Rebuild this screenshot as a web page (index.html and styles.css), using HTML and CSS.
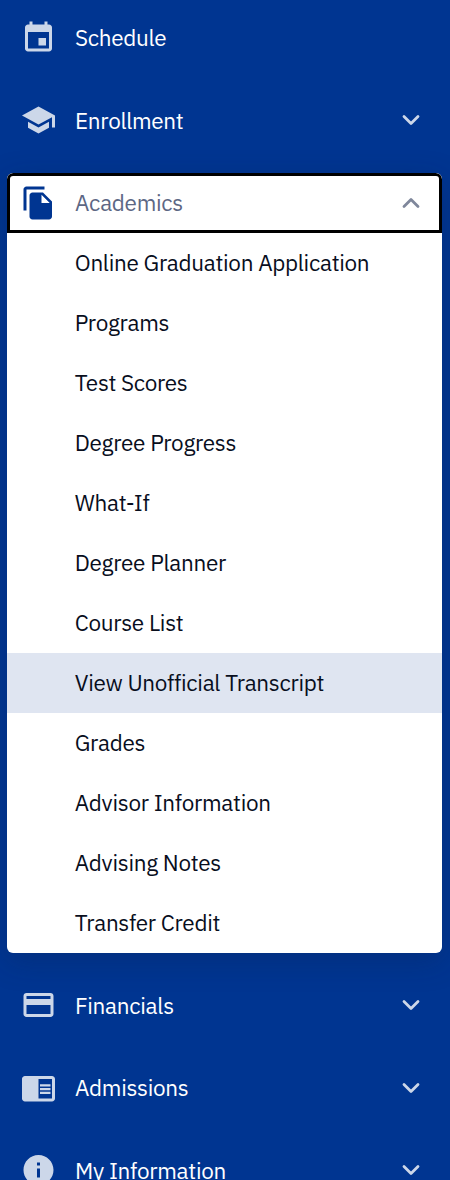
FILE: index.html
```
<!DOCTYPE html>
<html lang="en">
<head>
<meta charset="utf-8">
<title>Student menu</title>
<link rel="stylesheet" href="styles.css">
</head>
<body>
<nav class="menu">
  <a class="row">
    <svg class="icon" viewBox="-.33 0 24 24"><path d="M17 12h-5v5h5v-5zM16 1v2H8V1H6v2H5c-1.11 0-1.99.9-1.99 2L3 19c0 1.1.89 2 2 2h14c1.1 0 2-.9 2-2V5c0-1.1-.9-2-2-2h-1V1h-2zm3 18H5V8h14v11z"/></svg>
    <span class="label">Schedule</span>
  </a>
  <a class="row">
    <svg class="icon" viewBox="-.33 0 24 24"><path d="M5 13.18v4L12 21l7-3.82v-4L12 17l-7-3.82zM12 3L1 9l11 6 9-4.91V17h2V9L12 3z"/></svg>
    <span class="label">Enrollment</span>
    <svg class="chevron" viewBox="0 0 18 12"><path d="M2 2.5l7 7 7-7"/></svg>
  </a>
  <section class="panel">
    <a class="row row-open">
      <svg class="icon" viewBox="-.33 0 24 24"><path d="M16 1H4c-1.1 0-2 .9-2 2v14h2V3h12V1zm-1 4l6 6v10c0 1.1-.9 2-2 2H7.99C6.89 23 6 22.1 6 21l.01-14c0-1.1.89-2 1.99-2h7zm-1 7h5.5L14 6.5V12z"/></svg>
      <span class="label">Academics</span>
      <svg class="chevron" viewBox="0 0 18 12"><path d="M2 9.5l7-7 7 7"/></svg>
    </a>
    <a class="item">Online Graduation Application</a>
    <a class="item">Programs</a>
    <a class="item">Test Scores</a>
    <a class="item">Degree Progress</a>
    <a class="item">What-If</a>
    <a class="item">Degree Planner</a>
    <a class="item">Course List</a>
    <a class="item item-active">View Unofficial Transcript</a>
    <a class="item">Grades</a>
    <a class="item">Advisor Information</a>
    <a class="item">Advising Notes</a>
    <a class="item">Transfer Credit</a>
  </section>
  <a class="row">
    <svg class="icon" viewBox="-.33 0 24 24"><path d="M20 4H4c-1.11 0-1.99.89-1.99 2L2 18c0 1.11.89 2 2 2h16c1.11 0 2-.89 2-2V6c0-1.11-.89-2-2-2zm0 14H4v-6h16v6zm0-10H4V6h16v2z"/></svg>
    <span class="label">Financials</span>
    <svg class="chevron" viewBox="0 0 18 12"><path d="M2 2.5l7 7 7-7"/></svg>
  </a>
  <a class="row">
    <svg class="icon" viewBox="-.33 0 24 24"><path d="M13 12h7v1.5h-7zm0-2.5h7V11h-7zm0 5h7V16h-7zM21 4H3c-1.1 0-2 .9-2 2v13c0 1.1.9 2 2 2h18c1.1 0 2-.9 2-2V6c0-1.1-.9-2-2-2zm0 15h-9V6h9v13z"/></svg>
    <span class="label">Admissions</span>
    <svg class="chevron" viewBox="0 0 18 12"><path d="M2 2.5l7 7 7-7"/></svg>
  </a>
  <a class="row">
    <svg class="icon" viewBox="-.33 0 24 24"><path d="M12 2C6.48 2 2 6.48 2 12s4.48 10 10 10 10-4.48 10-10S17.52 2 12 2zm1 15h-2v-6h2v6zm0-8h-2V7h2v2z"/></svg>
    <span class="label">My Information</span>
    <svg class="chevron" viewBox="0 0 18 12"><path d="M2 2.5l7 7 7-7"/></svg>
  </a>
</nav>
</body>
</html>
```
FILE: styles.css
```
* { box-sizing: border-box; }

body {
  margin: 0;
  height: 1180px;
  overflow: hidden;
  background: #003591;
  font-family: "IBM Plex Sans", Roboto, "Liberation Sans", sans-serif;
  font-size: 22.5px;
  letter-spacing: -.3px;
  line-height: 30px;
}

.menu {
  display: flex;
  flex-direction: column;
  gap: 22.5px;
  padding: 8px 8px 0 7px;
  height: 1180px;
  overflow: hidden;
}

.row {
  display: flex;
  flex: none;
  align-items: center;
  height: 60px;
  padding: 0 22px 0 13px;
  color: #fff;
}

.icon {
  flex: none;
  width: 36px;
  height: 36px;
  margin: 0 19px .5px 0;
  fill: #ccd7e9;
}

.label { flex: 1; }

.chevron {
  width: 18px;
  height: 12px;
  margin-bottom: .5px;
  fill: none;
  stroke: #ccd7e9;
  stroke-width: 2.8;
  stroke-linecap: round;
  stroke-linejoin: round;
}

.panel {
  flex: none;
  border-radius: 6px;
  overflow: hidden;
  background: #fff;
  box-shadow: 0 8px 30px rgba(15, 35, 75, .27);
}

.row-open {
  border: 3px solid #000;
  border-radius: 6px 6px 0 0;
  padding: 0 19px 0 10px;
  color: #5d6784;
}

.row-open .icon { fill: #003591; }
.row-open .chevron { stroke: #7f879b; }

.item {
  display: block;
  height: 60px;
  padding: 15px 0 15px 67.75px;
  color: #080e1d;
}

.item-active { background: #dfe5f1; }
```
